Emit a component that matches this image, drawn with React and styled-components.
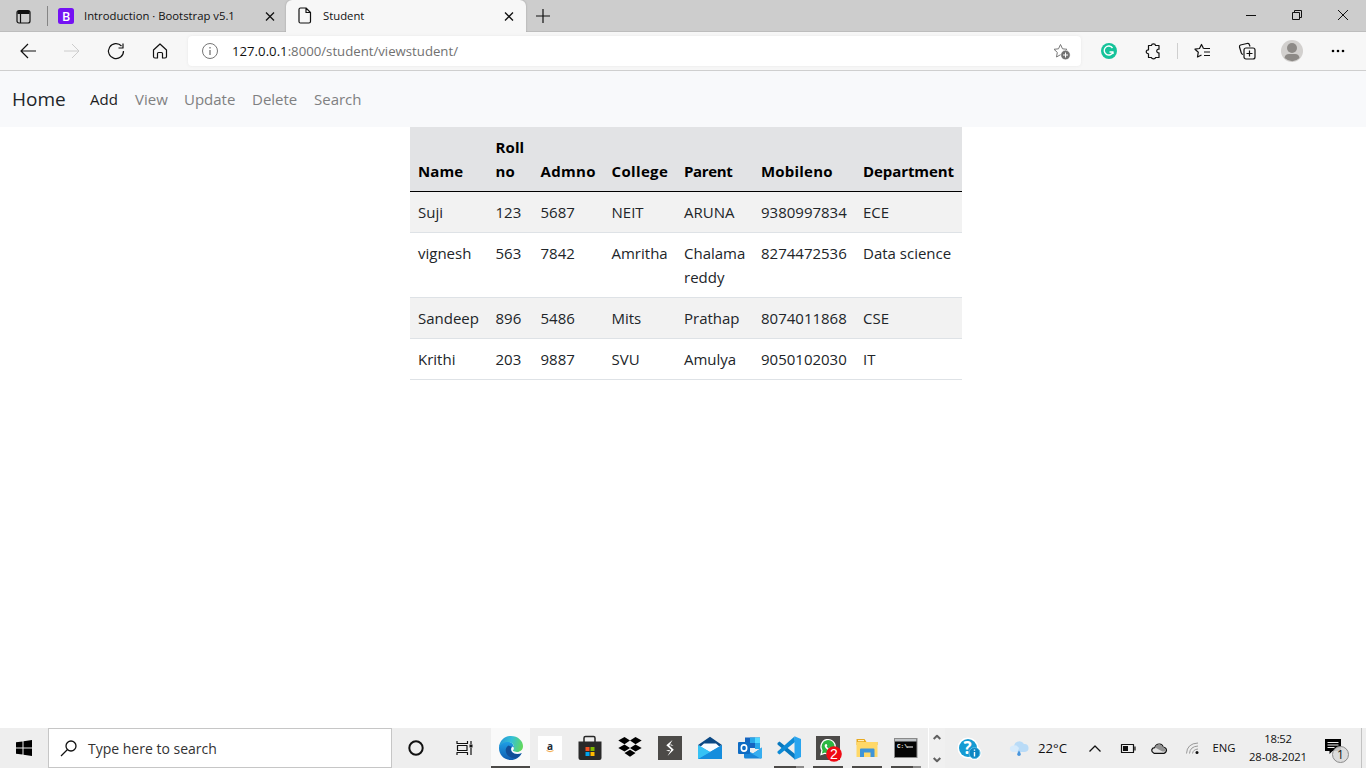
import React from 'react';
import styled, { createGlobalStyle } from 'styled-components';

const Global = createGlobalStyle`
  * { box-sizing: border-box; }
  body { margin: 0; background: #fff; font-family: "Open Sans", "Noto Sans", sans-serif; }
  svg { display: block; flex: none; overflow: visible; }
`;

const Screen = styled.div`
  width: 1366px;
  height: 768px;
  display: flex;
  flex-direction: column;
  overflow: hidden;
`;

const Slot = styled.div`
  width: ${p => p.$w}px;
  height: 100%;
  flex: none;
  display: flex;
  align-items: center;
  justify-content: center;
`;

const Label = styled.span`
  font-size: ${p => p.$size || 12}px;
  letter-spacing: ${p => p.$ls || 0}px;
  color: ${p => p.$color || '#111'};
  white-space: nowrap;
  line-height: 1;
  padding-top: ${p => p.$drop || 0}px;
`;

/* ---------- browser frame ---------- */
const TabStrip = styled.div`
  height: 32px;
  flex: none;
  display: flex;
  background: #cdcdcd;
  box-shadow: inset 0 -1px 0 #bdbdbd;
`;

const Tab = styled.div`
  width: ${p => p.$w}px;
  height: 32px;
  display: flex;
  align-items: center;
  padding: 0 ${p => (p.$active ? 11 : 10)}px 1px ${p => p.$pad}px;
  gap: ${p => p.$gap}px;
  background: ${p => (p.$active ? '#f7f7f7' : 'transparent')};
  border-radius: ${p => (p.$active ? '6px 6px 0 0' : '0')};
  box-shadow: ${p => (p.$active ? '0 0 2px #999' : 'none')};
  clip-path: inset(0 -3px 0 -3px);
  svg:last-child { margin-left: auto; }
`;

const TabDivider = styled.div`
  width: 1px;
  height: 20px;
  margin-top: 6px;
  background: #858585;
`;

const WindowButtons = styled.div`
  margin-left: auto;
  display: flex;
  height: 29px;
`;

const Toolbar = styled.div`
  height: 39px;
  flex: none;
  display: flex;
  align-items: center;
  padding-left: 6px;
  background: #f7f7f7;
  border-bottom: 1px solid #cfcfcf;
`;

const AddressBar = styled.div`
  width: 893px;
  height: 30px;
  margin-left: 6px;
  margin-right: 6px;
  display: flex;
  align-items: center;
  padding: 0 10px 0 14px;
  background: #fff;
  border-radius: 4px;
  box-shadow: 0 0 3px #e6e6e6;
  svg:last-child { margin-left: auto; }
`;

const Url = styled(Label)`
  margin-left: 14px;
  b { font-weight: 400; color: #111; }
`;

const ToolDivider = styled.div`
  width: 1px;
  height: 16px;
  background: #cfcfcf;
`;

/* ---------- page ---------- */
const Page = styled.main`
  flex: 1;
  background: #fff;
`;

const Navbar = styled.nav`
  height: 56px;
  display: flex;
  align-items: center;
  padding: 0 12px;
  background: #f8f9fb;
`;

const Brand = styled.a`
  width: 78px;
  font-size: 19px;
  line-height: 30px;
  color: #212529;
`;

const NavItem = styled.a`
  width: ${p => p.$w}px;
  font-size: 15px;
  line-height: 24px;
  color: ${p => (p.$active ? '#1c1c1d' : '#7f8081')};
`;

const Table = styled.table`
  width: 552px;
  margin-left: 410px;
  table-layout: fixed;
  border-collapse: separate;
  border-spacing: 0;
  font-size: 15px;
  line-height: 24px;
  color: #212529;
`;

const HeadCell = styled.th`
  height: 65px;
  padding: 8px 0 8px 8px;
  text-align: left;
  vertical-align: bottom;
  font-weight: 700;
  letter-spacing: ${p => p.$ls}px;
  color: #000;
  background: #e2e3e5;
  border-bottom: 1px solid #000;
`;

const Row = styled.tr`
  background: ${p => (p.$striped ? '#f2f2f2' : '#fff')};
`;

const Cell = styled.td`
  padding: 8px 0 8px 8px;
  vertical-align: top;
  border-bottom: 1px solid #dee2e6;
`;

/* ---------- taskbar ---------- */
const Taskbar = styled.footer`
  height: 40px;
  flex: none;
  display: flex;
  align-items: center;
  background: #eee;
`;

const SearchBox = styled.div`
  width: 344px;
  height: 40px;
  flex: none;
  display: flex;
  align-items: center;
  padding-left: 11px;
  gap: 11px;
  background: #fff;
  border: 1px solid #c6c6c6;
`;

const TaskButton = styled.div`
  width: ${p => p.$w || 39}px;
  height: 40px;
  flex: none;
  display: flex;
  flex-direction: column;
  align-items: center;
  justify-content: space-between;
  padding-top: 8px;
  background: ${p => (p.$active ? '#f9f9f9' : 'transparent')};
`;

const RunBar = styled.div`
  width: ${p => p.$w}px;
  height: 2px;
  background: ${p => (p.$multi ? 'linear-gradient(90deg,#4c4a48 73%,#8c8b8a 73%)' : '#4c4a48')};
`;

const Scroller = styled.div`
  width: 17px;
  height: 40px;
  flex: none;
  display: flex;
  flex-direction: column;
  align-items: center;
  justify-content: space-between;
  padding: 6px 0 5px;
  border-left: 1px solid #fff;
  background: #f0f0f0;
`;

const Clock = styled.div`
  width: 60px;
  height: 40px;
  flex: none;
  display: flex;
  flex-direction: column;
  align-items: center;
  justify-content: center;
  gap: 6px;
  padding-bottom: 1px;
`;

const ShowDesktop = styled.div`
  width: 5px;
  height: 40px;
  flex: none;
  margin-left: auto;
  border-left: 1px solid #c2c2c2;
`;

const Line = ({ w = 16, h = 16, c = '#111', sw = 1, children }) => (
  <svg width={w} height={h} viewBox={`0 0 ${w} ${h}`} fill="none" stroke={c} strokeWidth={sw} strokeLinejoin="round">
    {children}
  </svg>
);

const Close = () => <Line w={12} h={12} sw={1.3}><path d="M2 2.500l8 8M10 2.500l-8 8" /></Line>;

const EdgeIcon = () => (
  <svg width="24" height="24" viewBox="0 0 24 24">
    <defs>
      <linearGradient id="eg" x1="0" y1=".3" x2="1" y2=".5"><stop offset="0" stopColor="#2596d8" /><stop offset=".5" stopColor="#35c1d6" /><stop offset="1" stopColor="#62d95c" /></linearGradient>
      <linearGradient id="eb" x1="0" y1="0" x2="0" y2="1"><stop offset="0" stopColor="#1fa0e6" /><stop offset="1" stopColor="#0f5cb0" /></linearGradient>
    </defs>
    <path fill="url(#eb)" d="M0 12C0 7 4 5 8 5.500c4 0 7 3 7 6l-1.500 4.500 9 1.500C20.500 21.500 16.500 24 12 24 5 24 0 19 0 12z" />
    <path fill="#124f98" d="M9.500 9.500c-3 2-3.500 5-2 8 1.800 3.500 5.500 5 9 5 2.500-1 5-3 6.300-5.500-4 2-8.500 1-10.300-1.500-1.300-2-.7-3.500.5-4.500z" />
    <path fill="url(#eg)" d="M0 11.500C.5 4.500 5.500 0 12 0c7 0 12 5 12 10 0 4-3 6-6 6-3.500 0-5-1-3.500-2.500C16.500 9.500 13 6 8.500 6 4.500 6 1 8.500 0 11.500z" />
    <path fill="#f9f9f9" d="M13.500 10.500c2 .8 1.500 2.300.8 3.200-1 1.300.5 2.300 3.700 2.300 2 0 3.500-.7 4.700-1.800l-.3 2.800c-3.500 1.800-7.400 1-9.200-1-1.500-1.700-1.500-4.200.3-5.500z" />
  </svg>
);

const Amazon = () => (
  <svg width="24" height="24"><rect width="24" height="24" fill="#fff" />
    <text x="12" y="14" textAnchor="middle" fontSize="10" fontWeight="700" fill="#222b36">a</text>
    <path d="M8.500 14.600q3.500 2.300 7 0" stroke="#f3a847" fill="none" />
  </svg>
);

const Store = () => (
  <svg width="24" height="24">
    <path d="M6 6V2q0-1.500 1.500-1.500h8Q17 .5 17 2v4" fill="none" stroke="#262626" strokeWidth="1.500" />
    <path d="M.5 5.500h23V22q0 2-2 2h-19q-2 0-2-2z" fill="#292929" />
    <path fill="#f25022" d="M7.500 11h4v4h-4z" /><path fill="#7fba00" d="M12.500 11h4v4h-4z" />
    <path fill="#00a4ef" d="M7.500 16h4v4h-4z" /><path fill="#ffb900" d="M12.500 16h4v4h-4z" />
  </svg>
);

const Dropbox = () => (
  <svg width="24" height="24" fill="#000">
    <path d="M6.500 1L12 4.600 6.500 8.200.3 4.600zM17.500 1l6.200 3.600-6.200 3.600L12 4.600zM6.500 8.400L12 12l-5.500 3.600L.3 12zM17.500 8.400l6.200 3.600-6.200 3.600L12 12zM12 13.800l5.500 3.300L12 20.700l-5.500-3.600z" />
  </svg>
);

const Shortcut = () => (
  <svg width="24" height="24"><rect width="24" height="24" fill="#4c4a48" />
    <path fill="#fff" d="M14.500 4L8.300 9.200l5 4.600L9.500 20l6.300-6.200-4.500-4.300z" />
    <path fill="#fff" d="M12.500 8l3 1.800-2.800-.3zM8 14.300l3.300 1.200.7-1.500z" />
  </svg>
);

const Mail = () => (
  <svg width="24" height="24">
    <path fill="#f8fbff" d="M3 7h18v8H3z" />
    <path fill="#2ea8ed" d="M0 9l12 7 12-7v14H0z" /><path fill="#168ddd" d="M0 23l24-14v14z" /><path fill="#36c2f5" d="M0 9l12 7L0 23z" />
    <path fill="#0b4884" d="M0 9L12 .7 24 9l-3 1.300L18 7.500H6l-3 2.800z" />
  </svg>
);

const Outlook = () => (
  <svg width="24" height="24">
    <path fill="#1565c0" d="M7 1.500h15V12H7z" /><path fill="#28a8ea" d="M12 1.500h5V7h-5zM17 7h5v6h-5z" /><path fill="#50d9ff" d="M17 1.500h5V7h-5z" />
    <path fill="#1a86d8" d="M6 13l9 4.500 9-6V21q0 1.500-1.500 1.500h-15Q6 22.500 6 21z" /><path fill="#37aef0" d="M24 11.500V21q0 1.500-1.500 1.500L10 15.500l5 2z" />
    <rect y="6" width="12" height="12" rx="1" fill="#0f6cc4" /><ellipse cx="6" cy="12" rx="2.700" ry="3.100" fill="none" stroke="#fff" strokeWidth="1.600" />
  </svg>
);

const Code = () => (
  <svg width="24" height="24">
    <path fill="#0878be" d="M.5 7L2.500 5.500 18 18v5.500L.5 8.500z" /><path fill="#0e8bd6" d="M.5 15.500L17.500.5 18 6 2.500 18.500.5 17z" />
    <path fill="#29a5ef" d="M17.500.2L24 3v18l-6.500 2.800z" />
  </svg>
);

const WhatsApp = () => (
  <svg width="24" height="24">
    <rect width="24" height="24" fill="#4c4a48" />
    <path d="M5 18.500l1-4A7.200 7.200 0 1 1 9 17.200z" fill="#2cb742" stroke="#fff" strokeWidth="1.200" />
    <path d="M9.300 8.200q-1.500 1.300.5 4t5 2l1-1.500-2-1.300-1 1q-1.800-1-2.200-2.200l.8-.8-.8-1.500z" fill="#fff" />
    <circle cx="18" cy="18" r="7.800" fill="#f00a14" />
    <text x="18" y="23" textAnchor="middle" fontFamily="Liberation Sans, sans-serif" fontSize="14" fill="#fff">2</text>
  </svg>
);

const Folder = () => (
  <svg width="24" height="24">
    <path fill="#e8a91f" d="M1.500 3h8l2 3h11v3h-21z" /><path fill="#ffd868" d="M1.500 6h21v15h-21z" /><path fill="#fff0bd" d="M3 4h6v1.200H3z" />
    <path fill="#3e94d8" d="M5 21v-7.500Q5 12.500 6 12.500h12.500q1 0 1 1V21h-4v-4.500h-6.500V21z" />
  </svg>
);

const Terminal = () => (
  <svg width="24" height="24">
    <rect x=".5" y="2.500" width="22.500" height="19" fill="#050505" stroke="#8a8a8a" /><path fill="#bfc3c6" d="M1 3h21.500v2.500H1z" />
    <text x="3" y="11.500" fontFamily="Liberation Mono, monospace" fontSize="6" fontWeight="700" fill="#fff">C:\</text>
    <path d="M13 11h6" stroke="#fff" />
  </svg>
);

const Help = () => (
  <svg width="24" height="24">
    <circle cx="11" cy="12" r="10.500" fill="#fff" /><circle cx="17.500" cy="17" r="7" fill="#fff" />
    <circle cx="11" cy="12" r="9" fill="#159bd3" />
    <text x="10.500" y="18" textAnchor="middle" fontSize="17" fontWeight="700" fill="#fff">?</text>
    <circle cx="17.500" cy="17" r="5.500" fill="#0d86c3" stroke="#58bce5" />
    <path stroke="#fff" strokeWidth="1.400" d="M17.500 16v4.500M17.500 13.500v1.300" />
  </svg>
);

const Weather = () => (
  <svg width="20" height="18">
    <path fill="#b9dbf7" d="M5 13V6.500A5.500 5.500 0 0 1 15 5a4 4 0 0 1 1 8z" />
    <path fill="#d6eafb" d="M3.500 13A3.200 3.200 0 0 1 3 6.800q4.500-1.800 7 2.200l-1.500 4z" />
    <path fill="#4795dd" d="M10 11.500q-3.500 5 0 5.500 3.500-.5 0-5.500z" />
  </svg>
);

const Arrow = ({ up }) => (
  <Line w={8} h={6} c="#606060" sw={2}><path d={up ? 'M.7 5l3.300-3.300L7.300 5' : 'M.7 1L4 4.300 7.300 1'} /></Line>
);

const Star = 'M7.500 1.500l2 4.300 4.500.5-3.200 3.100.8 4.600-4.100-2.300-4 2.300.8-4.600L1 6.300l4.500-.5z';

const widths = [77.5, 45, 71, 72.5, 77, 102, 107];
const heads = [['Name', 0.1], ['Roll no', 0.1], ['Admno', 0.3], ['College', 0.35], ['Parent', -0.35], ['Mobileno', 0.2], ['Department', -0.08]];
const students = [
  ['Suji', '123', '5687', 'NEIT', 'ARUNA', '9380997834', 'ECE'],
  ['vignesh', '563', '7842', 'Amritha', 'Chalama reddy', '8274472536', 'Data science'],
  ['Sandeep', '896', '5486', 'Mits', 'Prathap', '8074011868', 'CSE'],
  ['Krithi', '203', '9887', 'SVU', 'Amulya', '9050102030', 'IT'],
];

const pinned = [
  { icon: <EdgeIcon />, w: 39, bar: 39, active: true },
  { icon: <Amazon />, w: 40 }, { icon: <Store />, w: 40 }, { icon: <Dropbox />, w: 40 },
  { icon: <Shortcut />, w: 40 }, { icon: <Mail />, w: 40 }, { icon: <Outlook />, w: 39 },
  { icon: <Code />, w: 39, bar: 30, multi: true }, { icon: <WhatsApp />, w: 39, bar: 30 },
  { icon: <Folder />, w: 39, bar: 30 }, { icon: <Terminal />, w: 39, bar: 30, multi: true },
];

export default function App() {
  return (
    <Screen>
      <Global />
      <TabStrip>
        <Slot $w={47}>
          <Line w={15} h={15} sw={1.200}>
            <rect x="1" y="1.500" width="13" height="12.500" rx="2" /><path d="M1.500 3.500h12" strokeWidth="3" /><path d="M4.500 5v9" />
          </Line>
        </Slot>
        <TabDivider />
        <Tab $w={238} $pad={10} $gap={10}>
          <svg width="16" height="16">
            <rect width="16" height="16" rx="2.500" fill="#7411f3" />
            <text x="8" y="12.500" textAnchor="middle" fontSize="12.500" fontWeight="600" fill="#fff">B</text>
          </svg>
          <Label $size={11.3}>Introduction · Bootstrap v5.1</Label>
          <Close />
        </Tab>
        <Tab $w={240} $pad={12} $gap={11} $active>
          <Line w={14} h={17} sw={1.200}><path d="M1 2.500Q1 1 2.500 1H8l4.500 4.500v9q0 1.500-1.500 1.500H2.500Q1 16 1 14.500zM8 1v4.500h4.500" /></Line>
          <Label $size={11.3}>Student</Label>
          <Close />
        </Tab>
        <Slot $w={34}><Line w={14} h={14} sw={1.200}><path d="M7 0v14M0 7h14" /></Line></Slot>
        <WindowButtons>
          <Slot $w={46}><Line w={10} h={10}><path d="M0 5.500h10" /></Line></Slot>
          <Slot $w={46}><Line w={10} h={10}><path d="M2.500 2V.5h7v7H8M.5 2.500h7v7h-7z" /></Line></Slot>
          <Slot $w={46}><Line w={10} h={10}><path d="M0 0l10 10M10 0L0 10" /></Line></Slot>
        </WindowButtons>
      </TabStrip>

      <Toolbar>
        <Slot $w={44}><Line sw={1.200}><path d="M8 1L1 8l7 7M1 8h15" /></Line></Slot>
        <Slot $w={44}><Line c="#ccc"><path d="M8 1l7 7-7 7M15 8H0" /></Line></Slot>
        <Slot $w={44}><Line sw={1.200}><path d="M13.500 3A7.500 7.500 0 1 0 15.500 8M15 .5v4.500h-4.500" /></Line></Slot>
        <Slot $w={44}><Line sw={1.200}><path d="M1.500 7L8 1l6.500 6v6.500q0 1.500-1.500 1.500h-2.500v-4.500q0-1-1-1h-3q-1 0-1 1V15H3q-1.500 0-1.500-1.500z" /></Line></Slot>
        <AddressBar>
          <Line w={16} c="#767676"><circle cx="8" cy="8" r="7.500" /><path d="M8 7v5M8 4v1.500" strokeWidth="1.300" /></Line>
          <Url $size={13.2} $drop={2} $color="#717171"><b>127.0.0.1</b>:8000/student/viewstudent/</Url>
          <Line w={18} c="#777"><path d={Star} /><circle cx="12.500" cy="12" r="4.700" fill="#717171" stroke="#fff" strokeWidth=".5" /><path d="M12.500 9.500v5M10 12h5" stroke="#fff" /></Line>
        </AddressBar>
        <Slot $w={44}>
          <Line><circle cx="8" cy="8" r="8" fill="#15c39a" stroke="none" /><path d="M11.500 5a4.500 4.500 0 1 0 .5 4H8.500M12 9v2" stroke="#fff" strokeWidth="1.400" /></Line>
        </Slot>
        <Slot $w={46}>
          <Line sw={1.200}><path d="M2.500 2.500h3c0-2.200 4-2.200 4 0H13v3.700c-3-.6-3 4.200 0 3.600v4.700H9.500c0 1.800-4 1.800-4 0h-3v-3.700c-3 0-3-4 0-4z" /></Line>
        </Slot>
        <ToolDivider />
        <Slot $w={47}><Line sw={1.200}><path d="M9.500 5.500l-2-4-2 4-4.500.7 3.300 3-.8 4.800L7.500 12M9.500 5.500H16M10 9h6M10 12.500h6" /></Line></Slot>
        <Slot $w={43}><Line sw={1.200}><path d="M4 11.500Q2.500 11 2.300 10L.5 4Q.2 2.500 1.500 2L8 .5Q10 0 10.500 2l.5 1.500" /><rect x="5" y="5" width="11" height="11" rx="2" /><path d="M10.500 7.500v6M7.500 10.500h6" /></Line></Slot>
        <Slot $w={47}>
          <svg width="22" height="22"><circle cx="11" cy="11" r="11" fill="#d2d0ce" /><circle cx="11" cy="8" r="5" fill="#8d8a87" /><path d="M3.500 18Q4 14 8 14h6q4 0 4.500 4-7 6.500-15 0z" fill="#8d8a87" /></svg>
        </Slot>
        <Slot $w={46}><svg width="14" height="4"><circle cx="2" cy="2" r="1.300" /><circle cx="7" cy="2" r="1.300" /><circle cx="12" cy="2" r="1.300" /></svg></Slot>
      </Toolbar>

      <Page>
        <Navbar>
          <Brand>Home</Brand>
          <NavItem $w={45} $active>Add</NavItem>
          <NavItem $w={49}>View</NavItem>
          <NavItem $w={68}>Update</NavItem>
          <NavItem $w={62}>Delete</NavItem>
          <NavItem $w={60}>Search</NavItem>
        </Navbar>
        <Table>
          <colgroup>{widths.map((w, i) => <col key={i} width={w} />)}</colgroup>
          <thead><tr>{heads.map(([h, ls]) => <HeadCell key={h} $ls={ls}>{h}</HeadCell>)}</tr></thead>
          <tbody>
            {students.map((s, i) => (
              <Row key={s[0]} $striped={i % 2 === 0}>{s.map((v, j) => <Cell key={j}>{v}</Cell>)}</Row>
            ))}
          </tbody>
        </Table>
      </Page>

      <Taskbar>
        <Slot $w={48}>
          <svg width="16" height="16"><path d="M0 2.300L6.500 1.400V7.500H0zM7.500 1.200L16 0v7.500H7.500zM0 8.500h6.500v6.100L0 13.700zM7.500 8.500H16V16l-8.500-1.200z" /></svg>
        </Slot>
        <SearchBox>
          <Line w={17} sw={1.300}><circle cx="11" cy="6" r="5" /><path d="M7.500 9.500L1 16" /></Line>
          <Label $size={14} $drop={2} $color="#333">Type here to search</Label>
        </SearchBox>
        <Slot $w={48}><Line sw={2}><circle cx="8" cy="8" r="6.700" /></Line></Slot>
        <Slot $w={48}>
          <Line w={17} h={16} sw={1.200}><path d="M1 1v2.500h10.500V1M1 15v-2.500h10.500V15M1.500 5.500h9.500v5H1.500zM15 1v3M15 8v7" /><path d="M13.500 4.500h3v3h-3z" fill="#111" stroke="none" /></Line>
        </Slot>
        <Slot $w={3} />
        {pinned.map((p, i) => (
          <TaskButton key={i} $w={p.w} $active={p.active}>{p.icon}{p.bar && <RunBar $w={p.bar} $multi={p.multi} />}</TaskButton>
        ))}
        <Slot $w={3} />
        <Scroller><Arrow up /><Arrow /></Scroller>
        <Slot $w={48}><Help /></Slot>
        <Slot $w={6} />
        <Slot $w={39}><Weather /></Slot>
        <Slot $w={29}><Label $size={13.2} $drop={2}>22°C</Label></Slot>
        <Slot $w={56}><Line w={12} h={7} sw={1.300}><path d="M.5 6.500L6 1l5.500 5.500" /></Line></Slot>
        <Slot $w={10}><Line w={15} h={9} sw={1.200}><path d="M.5 .5h12v8H.5zM14 2.500v4" /><path d="M2 2h5v5H2z" fill="#111" stroke="none" /></Line></Slot>
        <Slot $w={52}><Line w={16} h={11} sw={1.200}><path d="M3 10.300Q.5 9 .7 7q.5-2 3-2.300Q5 .8 8.500 1 11.500 1.300 12 4q3.300.6 3.500 3.200Q15 10 13 10.300z" fill="#e2e2e2" /><path d="M4 4.500l7.500 4q4 0 3.500-1.500Q14 4.300 12 4 10 0 6.500 1.700 4.500 3 4 4.500z" fill="#929292" stroke="none" /></Line></Slot>
        <Slot $w={15}><Line w={13} h={12} c="#999"><path d="M.5 11.500Q1 1.500 12 1M3.500 11.500Q4 4.500 12 4M6.500 11.500Q7 7.500 12 7" /><circle cx="11" cy="10.500" r="1.500" fill="#111" stroke="none" /></Line></Slot>
        <Slot $w={48}><Label $size={11.3}>ENG</Label></Slot>
        <Clock><Label $size={11.3} $ls={-0.3}>18:52</Label><Label $size={11.3} $ls={-0.1}>28-08-2021</Label></Clock>
        <Slot $w={6} />
        <Slot $w={46}>
          <svg width="24" height="24">
            <path d="M0 3h16v12H7.500L4.500 18v-3H0z" /><path d="M2.500 6.500h11M2.500 9h11M2.500 11.500h7" stroke="#eee" />
            <circle cx="15.500" cy="18.500" r="8" fill="#d9d9d9" fillOpacity=".9" stroke="#8c8c8c" />
            <text x="15.500" y="22.500" textAnchor="middle" fontSize="12" fill="#111">1</text>
          </svg>
        </Slot>
        <ShowDesktop />
      </Taskbar>
    </Screen>
  );
}
